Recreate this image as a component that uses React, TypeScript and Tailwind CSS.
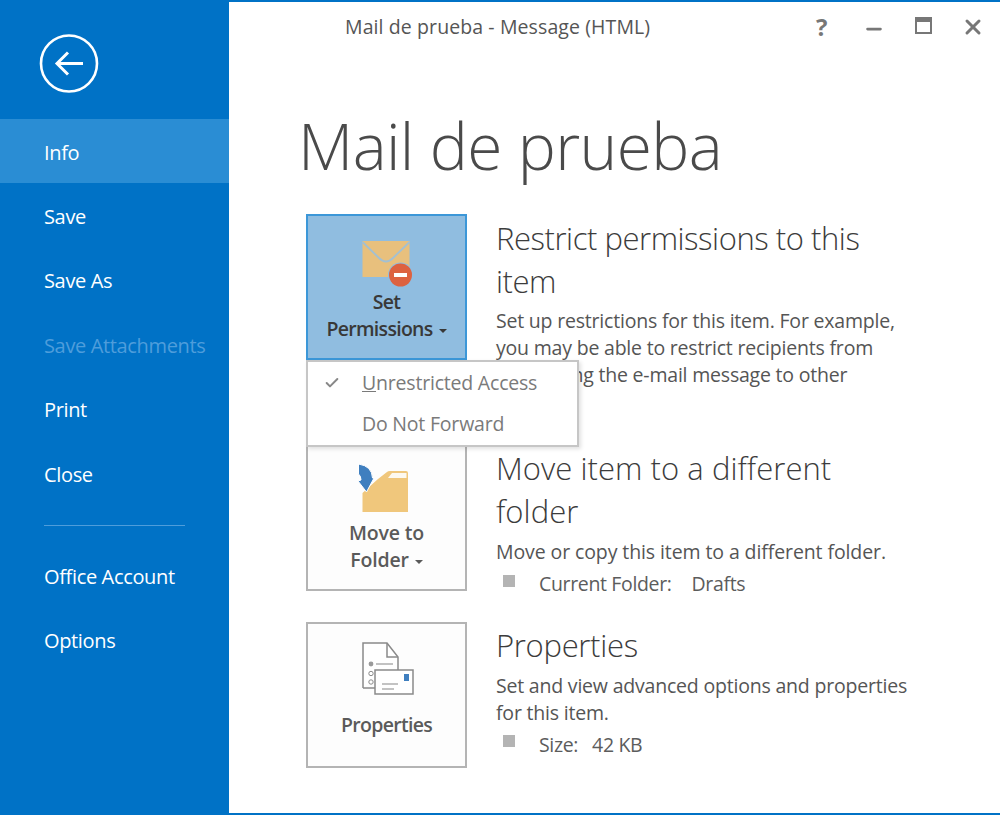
import { Check, Minus, X } from 'lucide-react'

const font = { fontFamily: '"Open Sans", "Noto Sans", sans-serif' }

const navItems = [
  { label: 'Info', active: true },
  { label: 'Save' },
  { label: 'Save As' },
  { label: 'Save Attachments', disabled: true },
  { label: 'Print' },
  { label: 'Close' },
]

function NavItem({ label, active, disabled }: { label: string; active?: boolean; disabled?: boolean }) {
  return (
    <div className={`h-[64.4px] flex items-center pl-[44px] pt-[3px] text-[20px] tracking-[-0.35px] ${active ? 'bg-[#2a8dd4] text-white' : disabled ? 'text-[#4e9ddb]' : 'text-white'}`}>
      {label}
    </div>
  )
}

function EnvelopeIcon() {
  return (
    <svg width="60" height="50" viewBox="0 0 60 50" className="block">
      <rect x="5.5" y="3" width="47" height="36" fill="#e8c07d" />
      <path d="M5.5 4 L22 20 Q29 27 36 20 L52.5 4" fill="none" stroke="#a3c0d2" strokeWidth="1.8" />
      <circle cx="43.5" cy="37" r="12.5" fill="#90bde0" />
      <circle cx="43.5" cy="37" r="11.5" fill="#dd6240" />
      <rect x="37" y="35" width="13" height="4" fill="#fff" />
    </svg>
  )
}

function FolderIcon() {
  return (
    <svg width="60" height="56" viewBox="0 0 60 56" className="block">
      <path d="M5.5 32 L21 18 L30 11 Q31 10 33 10 L49 10 Q51 10 51 12 L51 51 L5.5 51 Z" fill="#f0c77c" />
      <path d="M31 17 L35 12 L49.5 12 L49.5 17 Z" fill="#fdf9f0" />
      <path d="M1.5 3 Q15 5 15.5 17 L17 17 L9.5 31 L1 20 L4 19 Q4 15 1.5 13 Z" fill="#3f7fbf" stroke="#fff" strokeWidth="1" />
    </svg>
  )
}

function PropertiesIcon() {
  return (
    <svg width="60" height="60" viewBox="0 0 60 60" className="block">
      <path d="M6 47 L6 2 L30 2 L41 16 L41 30" fill="#fff" stroke="#8a8a8a" strokeWidth="1.5" />
      <path d="M30 2 L30 16 L41 16" fill="none" stroke="#8a8a8a" strokeWidth="1.5" />
      <path d="M6 47 L18 47" stroke="#8a8a8a" strokeWidth="1.5" />
      <circle cx="14" cy="23" r="2.4" fill="#9a9a9a" />
      <path d="M19 23 L36 23" stroke="#a8a8a8" strokeWidth="1.4" />
      <circle cx="14" cy="32.5" r="2.2" fill="#fff" stroke="#8a8a8a" />
      <circle cx="14" cy="41" r="2.2" fill="#fff" stroke="#8a8a8a" />
      <rect x="18" y="29" width="38" height="24" fill="#fff" stroke="#8a8a8a" strokeWidth="1.5" />
      <rect x="47" y="33" width="5" height="7" fill="#3f7fbf" />
      <path d="M25 43 L41 43 M25 48 L37 48" stroke="#b0b0b0" strokeWidth="1.4" />
    </svg>
  )
}

function Caret() {
  return <span className="inline-block ml-[6px] align-middle w-0 h-0 border-x-[4px] border-x-transparent border-t-[4px] border-t-current" />
}

function ActionButton({ active, icon, children, h }: { active?: boolean; icon: React.ReactNode; children: React.ReactNode; h: string }) {
  return (
    <div className={`w-[161px] shrink-0 flex flex-col items-center text-[19.5px] leading-[27px] tracking-[-0.7px] text-center font-semibold ${h} ${active ? 'bg-[#90bde0] border-2 border-[#3c97d8] text-[#383838]' : 'bg-[#fdfdfd] border-2 border-[#b4b4b4] text-[#5a5a5a]'}`}>
      {icon}
      {children}
    </div>
  )
}

function Bullet({ label, value, gap }: { label: string; value: string; gap: string }) {
  return (
    <div className="flex items-center text-[#5c5c5c] text-[19.5px] leading-[27px] tracking-[-0.35px] mt-[5px]">
      <span className="w-[12px] h-[12px] bg-[#b4b4b4] ml-[7px] mr-[24px] mb-[6px]" />
      <span className={gap}>{label}</span>
      <span>{value}</span>
    </div>
  )
}

export default function App() {
  return (
    <div style={font} className="w-[1000px] h-[815px] flex bg-[#0072c6] overflow-hidden">
      {/* Sidebar */}
      <div className="w-[229px] shrink-0 flex flex-col">
        <div className="h-[119px] pl-[39px] pt-[34px]">
          <svg width="60" height="60" viewBox="0 0 60 60" fill="none" stroke="#fff" className="block">
            <circle cx="30" cy="29.5" r="28" strokeWidth="2.6" />
            <path d="M18 29.5 L44 29.5" strokeWidth="3" />
            <path d="M29 18.5 L18 29.5 L29 40.5" strokeWidth="3" />
          </svg>
        </div>
        {navItems.map(item => <NavItem key={item.label} {...item} />)}
        <div className="h-px w-[141px] ml-[44px] bg-[#4e9ddb] mt-[20px] mb-[17px]" />
        <NavItem label="Office Account" />
        <NavItem label="Options" />
      </div>

      {/* Main */}
      <div className="flex-1 bg-white mt-[2px] mr-[2px] mb-[2px] relative flex flex-col">
        <div className="h-[45px] relative shrink-0 flex items-center pl-[116px] pt-[5px] text-[#555] text-[19.5px] tracking-[0.1px]">
          Mail de prueba - Message (HTML)
          <div className="absolute top-[13px] left-[587px] text-[#777] font-bold text-[24px] leading-[24px]">?</div>
          <Minus className="absolute top-[16px] left-[634px] text-[#777]" size={22} strokeWidth={3} />
          <div className="absolute top-[15px] left-[686px] w-[17px] h-[17px] border-2 border-t-[5px] border-[#777]" />
          <X className="absolute top-[13px] left-[732px] text-[#777]" size={24} strokeWidth={3} />
        </div>

        <div className="pl-[69px] text-[64px] leading-[80px] font-light text-[#4a4a4a] tracking-[-0.6px] mt-[59px] h-[80px]">
          Mail de prueba
        </div>

        <div className="pl-[77px] pr-[90px] mt-[28px] flex flex-col">
          {/* Set Permissions */}
          <div className="flex gap-[29px] h-[231px]">
            <ActionButton active h="h-[146px]" icon={<div className="mt-[22px] h-[50px]"><EnvelopeIcon /></div>}>
              <span>Set</span>
              <span>Permissions<Caret /></span>
            </ActionButton>
            <div className="text-[#555] text-[19.5px] leading-[27px] tracking-[-0.2px] w-[415px]">
              <div className="text-[31px] leading-[42.5px] font-light tracking-[-0.45px] text-[#3c3c3c] mt-[3px]">Restrict permissions to this item</div>
              <div className="mt-[5px]">Set up restrictions for this item. For example, you may be able to restrict recipients from forwarding the e-mail message to other people.</div>
            </div>
          </div>

          {/* Move */}
          <div className="flex gap-[29px] h-[177px]">
            <ActionButton h="h-[146px]" icon={<div className="mt-[14px] h-[58px]"><FolderIcon /></div>}>
              <span className="tracking-[-0.2px]">Move to</span>
              <span className="tracking-[-0.2px]">Folder<Caret /></span>
            </ActionButton>
            <div className="text-[#555] text-[19.5px] leading-[27px] tracking-[-0.1px] w-[415px]">
              <div className="text-[31px] leading-[42.5px] font-light tracking-[0.05px] text-[#3c3c3c] mt-[2px]">Move item to a different folder</div>
              <div className="mt-[6px]">Move or copy this item to a different folder.</div>
              <Bullet label="Current Folder:" value="Drafts" gap="mr-[20px]" />
            </div>
          </div>

          {/* Properties */}
          <div className="flex gap-[29px]">
            <ActionButton h="h-[146px]" icon={<div className="mt-[17px] h-[64px]"><PropertiesIcon /></div>}>
              <span className="mt-[6px]">Properties</span>
            </ActionButton>
            <div className="text-[#555] text-[19.5px] leading-[27px] tracking-[-0.2px] w-[415px]">
              <div className="text-[31px] leading-[42.5px] font-light tracking-[-0.3px] text-[#3c3c3c] mt-[2px]">Properties</div>
              <div className="mt-[5px]">Set and view advanced options and properties for this item.</div>
              <Bullet label="Size:" value="42 KB" gap="mr-[14px]" />
            </div>
          </div>
        </div>

        {/* Dropdown menu */}
        <div className="absolute left-[77px] top-[358px] w-[273px] h-[87px] bg-white border-2 border-[#c6c6c6] shadow-[2px_2px_4px_rgba(0,0,0,0.12)] text-[#7a7a7a] text-[19.5px] tracking-[-0.2px]">
          <div className="h-[42px] flex items-center">
            <Check className="ml-[16px] mr-[22px] text-[#888]" size={16} strokeWidth={3} />
            <span><span className="underline">U</span>nrestricted Access</span>
          </div>
          <div className="h-[40px] flex items-center pl-[54px]">Do Not Forward</div>
        </div>
      </div>
    </div>
  )
}
